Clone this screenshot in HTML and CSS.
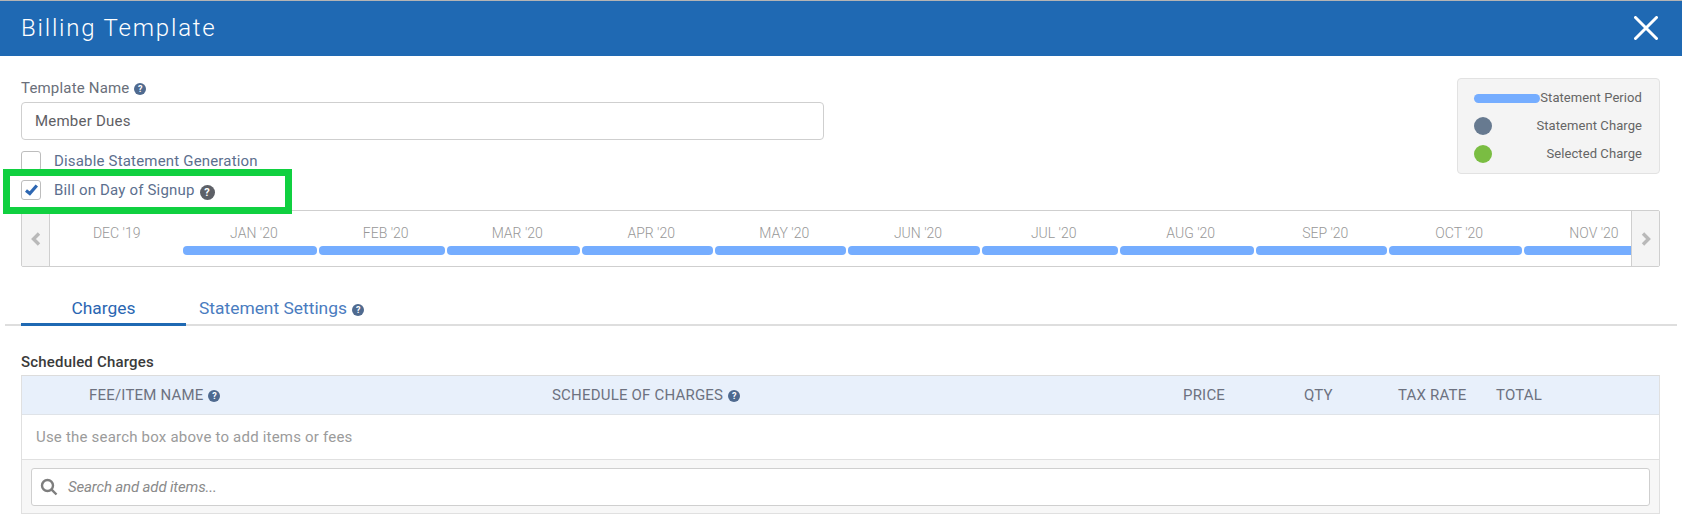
FILE: index.html
```html
<!DOCTYPE html>
<html lang="en">
<head>
<meta charset="utf-8">
<title>Billing Template</title>
<link rel="stylesheet" href="styles.css">
</head>
<body>
<div class="modal">
  <header class="modal-header">
    <h1 class="modal-title">Billing Template</h1>
    <svg class="close-icon" viewBox="0 0 24 24" width="24" height="24"><path d="M1.5 1.5 22.5 22.5M22.5 1.5 1.5 22.5"/></svg>
  </header>
  <div class="modal-body">
    <div class="top-row">
      <div class="form-col">
        <div class="field-label">Template Name <span class="help help-sm">?</span></div>
        <div class="text-input">Member Dues</div>
        <div class="check-row"><span class="checkbox"></span><span class="check-label">Disable Statement Generation</span></div>
        <div class="check-row check-row-2">
          <span class="checkbox"><svg viewBox="0 0 20 20" width="20" height="20"><path class="tick" d="M5 10.5 8.8 13.5 15.8 5.5"/></svg></span>
          <span class="check-label">Bill on Day of Signup</span><span class="help help-lg">?</span>
        </div>
        <div class="highlight"></div>
      </div>
      <div class="legend">
        <span class="legend-bar"></span><span class="legend-text">Statement Period</span>
        <span class="legend-dot dot-slate"></span><span class="legend-text">Statement Charge</span>
        <span class="legend-dot dot-green"></span><span class="legend-text">Selected Charge</span>
      </div>
    </div>

    <div class="timeline">
      <div class="nav-btn nav-left"><svg viewBox="0 0 12 16" width="12" height="16"><path d="M9 2.5 3.5 8 9 13.5"/></svg></div>
      <div class="months">
        <div class="month month-dec" style="flex-basis:133.4px"><div class="month-name">DEC '19</div></div>
        <div class="month" style="flex-basis:136px"><div class="month-name">JAN '20</div><div class="period"></div></div>
        <div class="month" style="flex-basis:127.6px"><div class="month-name">FEB '20</div><div class="period"></div></div>
        <div class="month" style="flex-basis:135.5px"><div class="month-name">MAR '20</div><div class="period"></div></div>
        <div class="month" style="flex-basis:132.5px"><div class="month-name">APR '20</div><div class="period"></div></div>
        <div class="month" style="flex-basis:133.5px"><div class="month-name">MAY '20</div><div class="period"></div></div>
        <div class="month" style="flex-basis:134px"><div class="month-name">JUN '20</div><div class="period"></div></div>
        <div class="month" style="flex-basis:137.5px"><div class="month-name">JUL '20</div><div class="period"></div></div>
        <div class="month" style="flex-basis:136.5px"><div class="month-name">AUG '20</div><div class="period"></div></div>
        <div class="month" style="flex-basis:132.5px"><div class="month-name">SEP '20</div><div class="period"></div></div>
        <div class="month" style="flex-basis:135.5px"><div class="month-name">OCT '20</div><div class="period"></div></div>
        <div class="month" style="flex-basis:134px"><div class="month-name">NOV '20</div><div class="period"></div></div>
      </div>
      <div class="nav-btn nav-right"><svg viewBox="0 0 12 16" width="12" height="16"><path d="M3 2.5 8.5 8 3 13.5"/></svg></div>
    </div>

    <nav class="tabs">
      <div class="tab tab-active">Charges</div>
      <div class="tab">Statement Settings <span class="help help-sm">?</span></div>
    </nav>

    <h2 class="section-title">Scheduled Charges</h2>
    <div class="charges">
      <div class="charges-head">
        <div class="col-name">FEE/ITEM NAME <span class="help help-sm">?</span></div>
        <div>SCHEDULE OF CHARGES <span class="help help-sm">?</span></div>
        <div>PRICE</div>
        <div>QTY</div>
        <div>TAX RATE</div>
        <div>TOTAL</div>
      </div>
      <div class="charges-empty">Use the search box above to add items or fees</div>
      <div class="charges-foot">
        <div class="search">
          <svg viewBox="0 0 18 18" width="18" height="18"><circle cx="7.5" cy="7.5" r="5.5"/><path d="M11.6 11.6 16.5 16.5"/></svg>
          <span>Search and add items...</span>
        </div>
      </div>
    </div>
  </div>
</div>
</body>
</html>
```
FILE: styles.css
```css
* { box-sizing: border-box; }
html, body { margin: 0; padding: 0; }
body {
  background: #fff;
  font-family: Roboto, "Liberation Sans", sans-serif;
  font-size: 15px;
  letter-spacing: 0.18px;
  color: #5f6470;
  height: 516px;
  overflow: hidden;
}
.modal { border-top: 1px solid #b4b4b4; }
.modal-header {
  height: 55px;
  background: #1f69b3;
  display: flex;
  align-items: center;
  justify-content: space-between;
  padding: 0 24px 2px 21px;
}
.modal-title {
  margin: 0;
  font-size: 24px;
  font-weight: 300;
  letter-spacing: 1.8px;
  color: #fff;
}
.close-icon { fill: none; stroke: #fff; stroke-width: 3; stroke-linecap: round; }

.modal-body { padding: 0 22px 0 21px; position: relative; }
.top-row { display: flex; justify-content: space-between; align-items: flex-start; height: 154px; }
.form-col { width: 803px; position: relative; padding-top: 23px; }
.field-label { line-height: 18px; color: #6a6f7a; margin-bottom: 5px; }
.text-input {
  height: 38px;
  border: 1px solid #cfcfcf;
  border-radius: 4px;
  padding: 0 13px;
  line-height: 36px;
  font-size: 15px;
  letter-spacing: 0.22px;
  color: #5e5e64;
  margin-bottom: 11px;
}
.check-row { display: flex; align-items: center; height: 20px; }
.check-row-2 { margin-top: 9px; }
.checkbox {
  width: 20px;
  height: 20px;
  border: 1px solid #bdbdbd;
  border-radius: 3px;
  background: #fff;
  flex: none;
  display: block;
}
.checkbox svg { display: block; margin: -1px; }
.tick { fill: none; stroke: #2d67b2; stroke-width: 3.2; }
.check-label { margin-left: 13px; color: #5c6f8e; line-height: 20px; }
.help {
  display: inline-block;
  border-radius: 50%;
  color: #fff;
  text-align: center;
  font-weight: 700;
  letter-spacing: 0;
  vertical-align: 1px;
}
.help-sm {
  width: 12px;
  height: 12px;
  font-size: 9px;
  line-height: 12px;
  background: #4f6a8f;
  margin-left: 1px;
}
.help-lg {
  width: 15px;
  height: 15px;
  font-size: 11px;
  line-height: 15px;
  background: #5d6067;
  margin-left: 5px;
  margin-top: 5px;
}
.highlight {
  position: absolute;
  left: -18px;
  top: 113px;
  width: 289px;
  height: 45px;
  border: 7px solid #10d040;
  pointer-events: none;
}

.legend {
  margin-top: 22px;
  width: 203px;
  height: 96px;
  background: #f4f4f4;
  border: 1px solid #e2e2e2;
  border-radius: 4px;
  padding: 5px 17px 0 16px;
  display: grid;
  grid-template-columns: 66px minmax(0, 1fr);
  grid-template-rows: repeat(3, 28px);
  align-items: center;
  font-size: 13px;
  letter-spacing: 0.08px;
  color: #656565;
}
.legend-text { justify-self: end; white-space: nowrap; line-height: 16px; }
.legend-bar { height: 9px; width: 66px; border-radius: 5px; background: #75adff; }
.legend-dot { width: 18px; height: 18px; border-radius: 50%; }
.dot-slate { background: #677a90; }
.dot-green { background: #7abd42; }

.timeline {
  height: 57px;
  border: 1px solid #cfcfcf;
  border-radius: 2px;
  display: flex;
  overflow: hidden;
}
.nav-btn {
  flex: none;
  width: 28px;
  background: #f4f4f4;
  display: flex;
  align-items: center;
  justify-content: center;
}
.nav-btn svg { fill: none; stroke: #b9b9b9; stroke-width: 3.4; }
.nav-left { border-right: 1px solid #cfcfcf; }
.nav-right { border-left: 1px solid #cfcfcf; }
.months { flex: 1; display: flex; overflow: hidden; min-width: 0; }
.month { flex-shrink: 0; flex-grow: 0; }
.month-name {
  height: 35px;
  padding: 14px 0 0 5px;
  line-height: 16px;
  text-align: center;
  font-size: 14px;
  letter-spacing: 0;
  font-weight: 300;
  color: #979797;
  white-space: nowrap;
}
.month-dec .month-name { padding-left: 0; }
.period { height: 9px; margin-right: 2px; border-radius: 4px; background: #75adff; }

.tabs {
  margin: 26px -17px 0 -16px;
  padding-left: 16px;
  height: 33px;
  border-bottom: 2px solid #dedede;
  display: flex;
  font-size: 17.4px;
  letter-spacing: 0;
  font-weight: 400;
}
.tab { color: #4a7cc0; height: 33px; line-height: 30px; white-space: nowrap; padding-left: 13px; }
.tab-active {
  width: 165px;
  padding-left: 0;
  text-align: center;
  color: #2a66b2;
  border-bottom: 3px solid #1f69b3;
}
.section-title {
  margin: 27px 0 0;
  font-size: 15px;
  letter-spacing: 0.18px;
  line-height: 18px;
  font-weight: 500;
  color: #3a3a3a;
  height: 22px;
}
.charges { border: 1px solid #e0e0e0; border-top-color: #dcdcdc; }
.charges-head {
  height: 39px;
  background: #e8f0fb;
  border-bottom: 1px solid #dfe3e8;
  display: grid;
  grid-template-columns: 530px 631px 121px 94px 98px 1fr;
  align-items: center;
  font-size: 15px;
  letter-spacing: 0.2px;
  color: #6d7280;
  white-space: nowrap;
}
.col-name { padding-left: 67px; }
.charges-empty {
  height: 45px;
  line-height: 44px;
  padding-left: 14px;
  letter-spacing: 0.2px;
  color: #9b9b9b;
  border-bottom: 1px solid #e0e0e0;
}
.charges-foot { height: 53px; background: #f7f7f7; padding: 8px 9px; }
.search {
  height: 38px;
  background: #fff;
  border: 1px solid #cfcfcf;
  border-radius: 3px;
  display: flex;
  align-items: center;
  padding-left: 8px;
  font-style: italic;
  font-size: 15px;
  letter-spacing: -0.15px;
  color: #8a8a8a;
}
.search svg { fill: none; stroke: #7e7e7e; stroke-width: 2.4; margin-right: 10px; }
```
